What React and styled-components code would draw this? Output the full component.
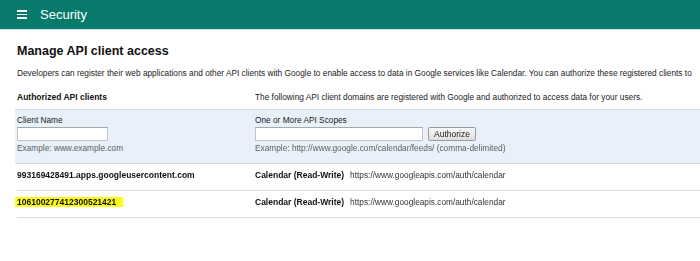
import React from 'react';
import styled, { createGlobalStyle } from 'styled-components';

const GlobalStyle = createGlobalStyle`
  body {
    margin: 0;
    background: #fff;
    font-family: "Liberation Sans", Arial, sans-serif;
    color: #222;
    overflow: hidden;
  }
`;

const TopBar = styled.div`
  height: 29px;
  background: #077a6b;
  border-bottom: 1px solid #cfe2de;
  display: flex;
  align-items: center;
  padding-left: 17px;
  gap: 13px;
  color: #fff;
`;

const Burger = styled.div`
  width: 10px;
  display: flex;
  flex-direction: column;
  gap: 2px;
  span {
    display: block;
    height: 1.4px;
    background: #fff;
  }
`;

const BarTitle = styled.div`
  font-size: 13px;
  line-height: 15px;
`;

const Content = styled.div`
  padding: 14px 0 0 17px;
`;

const Title = styled.h1`
  margin: 0;
  font-size: 12.5px;
  line-height: 15px;
  font-weight: bold;
  color: #111;
`;

const Desc = styled.p`
  margin: 8.5px 0 0;
  font-size: 8.3px;
  line-height: 10px;
  white-space: nowrap;
`;

const Row = styled.div`
  display: grid;
  grid-template-columns: 238px 1fr;
  font-size: 8.3px;
  line-height: 10px;
  padding: ${({ $pad }) => $pad || '6px 0 10px'};
  border-bottom: ${({ $line }) => ($line ? '1px solid #dcdcdc' : 'none')};
`;

const Band = styled.div`
  display: grid;
  grid-template-columns: 238px 1fr;
  margin-left: -2px;
  padding: 5px 0 10px 2px;
  background: #e8f0fa;
  border-top: 1px solid #d3dbe4;
  border-bottom: 1px solid #d3dbe4;
  font-size: 8.3px;
  line-height: 10px;
`;

const Field = styled.div`
  display: flex;
  flex-direction: column;
  align-items: flex-start;
  gap: 2px;
`;

const Input = styled.input`
  box-sizing: border-box;
  width: ${({ $w }) => $w}px;
  height: 14px;
  margin: 0;
  padding: 0 2px;
  border: 1px solid #c4c4c4;
  border-top-color: #a8a8a8;
  background: #fff;
  font: inherit;
  outline: none;
`;

const InputLine = styled.div`
  display: flex;
  align-items: center;
  gap: 5px;
`;

const Button = styled.button`
  box-sizing: border-box;
  width: 48px;
  height: 14px;
  padding: 0;
  border: 1px solid #9a9a9a;
  border-radius: 2px;
  background: linear-gradient(#fafafa, #dedede);
  font-family: inherit;
  font-size: 8.5px;
  color: #222;
`;

const Hint = styled.span`
  color: #5f5f5f;
`;

const Strong = styled.span`
  font-weight: bold;
  font-size: 8.5px;
  color: #111;
`;

const Marked = styled(Strong)`
  background: #fbfb1e;
  margin-left: -2px;
  padding: 0 7px 0 2px;
`;

const Url = styled.span`
  margin-left: 6px;
  color: #333;
`;

const clients = [
  { name: '993169428491.apps.googleusercontent.com' },
  { name: '106100277412300521421', marked: true },
];

export default function App() {
  return (
    <>
      <GlobalStyle />
      <TopBar>
        <Burger>
          <span />
          <span />
          <span />
        </Burger>
        <BarTitle>Security</BarTitle>
      </TopBar>
      <Content>
        <Title>Manage API client access</Title>
        <Desc>
          Developers can register their web applications and other API clients with Google to enable access to data in Google services like Calendar. You can authorize these registered clients to
        </Desc>
        <Row $pad="14.5px 0 7px">
          <Strong>Authorized API clients</Strong>
          <span>The following API client domains are registered with Google and authorized to access data for your users.</span>
        </Row>
        <Band>
          <Field>
            <span>Client Name</span>
            <Input $w={91} />
            <Hint>Example: www.example.com</Hint>
          </Field>
          <Field>
            <span>One or More API Scopes</span>
            <InputLine>
              <Input $w={168} autoFocus />
              <Button>Authorize</Button>
            </InputLine>
            <Hint>Example: http://www.google.com/calendar/feeds/ (comma-delimited)</Hint>
          </Field>
        </Band>
        {clients.map((c) => (
          <Row key={c.name} $line>
            <div>{c.marked ? <Marked>{c.name}</Marked> : <Strong>{c.name}</Strong>}</div>
            <div>
              <Strong>Calendar (Read-Write)</Strong>
              <Url>https://www.googleapis.com/auth/calendar</Url>
            </div>
          </Row>
        ))}
      </Content>
    </>
  );
}
